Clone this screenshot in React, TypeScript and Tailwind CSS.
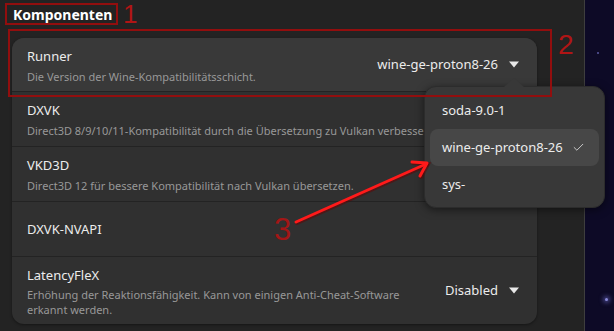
import { Check } from 'lucide-react'

const ROWS = [
  { title: 'DXVK', sub: 'Direct3D 8/9/10/11-Kompatibilität durch die Übersetzung zu Vulkan verbessern.' },
  { title: 'VKD3D', sub: 'Direct3D 12 für bessere Kompatibilität nach Vulkan übersetzen.' },
]

function Caret() {
  return (
    <svg width="12" height="7" viewBox="0 0 12 7" className="shrink-0">
      <path d="M1 0.5 L11 0.5 L6 6.5 Z" fill="#e8e8e8" />
    </svg>
  )
}

function Row({ title, sub }: { title: string; sub?: string }) {
  return (
    <div className="h-[55px] flex flex-col justify-center gap-[3px] px-[15px] border-b border-[#232323]">
      <p className="text-[13px] leading-[20px] text-[#ececec]">{title}</p>
      {sub && <p className="text-[11px] leading-[15px] text-[#989898] whitespace-nowrap overflow-hidden">{sub}</p>}
    </div>
  )
}

export default function App() {
  return (
    <div className="relative w-[614px] h-[331px] flex overflow-hidden font-['Noto_Sans',sans-serif]">
      <div className="w-[585px] h-full bg-[#232323] border-r border-[#3e3e3e] pt-[5px] pl-[12px]">
        <h2 className="pl-[1px] text-[14px] leading-[19px] font-bold text-white">Komponenten</h2>
        <div className="mt-[14px] w-[525px] rounded-[12px] bg-[#303030] overflow-hidden shadow-[0_1px_3px_rgba(0,0,0,0.4)]">
          <div className="h-[54px] flex items-center justify-between pl-[15px] pr-[17px] bg-[#393939] border-b border-[#232323]">
            <div className="flex flex-col gap-[3px]">
              <p className="text-[13px] leading-[20px] text-[#ececec]">Runner</p>
              <p className="text-[11px] leading-[15px] text-[#989898]">Die Version der Wine-Kompatibilitätsschicht.</p>
            </div>
            <div className="flex items-center gap-[10px]">
              <span className="text-[13px] text-[#ececec]">wine-ge-proton8-26</span>
              <Caret />
            </div>
          </div>
          {ROWS.map(r => (
            <Row key={r.title} title={r.title} sub={r.sub} />
          ))}
          <Row title="DXVK-NVAPI" />
          <div className="h-[67px] flex items-center justify-between pl-[15px] pr-[17px]">
            <div className="flex flex-col gap-[2px] w-[400px]">
              <p className="text-[13px] leading-[20px] text-[#ececec]">LatencyFleX</p>
              <p className="text-[11px] leading-[15px] text-[#989898]">
                Erhöhung der Reaktionsfähigkeit. Kann von einigen Anti-Cheat-Software erkannt werden.
              </p>
            </div>
            <div className="flex items-center gap-[10px]">
              <span className="text-[13px] text-[#ececec]">Disabled</span>
              <Caret />
            </div>
          </div>
        </div>
      </div>
      <div className="relative flex-1 h-full bg-[#0d0a26]">
        <span className="absolute left-[12px] top-[52px] w-[2px] h-[2px] rounded-full bg-[#5a5aa0]" />
        <span className="absolute left-[20px] top-[298px] w-[3px] h-[3px] rounded-full bg-[#8a8ad8] shadow-[0_0_4px_2px_rgba(120,120,220,0.5)]" />
        <span className="absolute left-[10px] top-[182px] w-[1px] h-[1px] bg-[#5050a0]" />
      </div>

      {/* dropdown popover */}
      <div className="absolute left-[424px] top-[86px] w-[181px] h-[122px] rounded-[12px] bg-[#383838] border border-[#2c2c2c] shadow-[0_2px_8px_rgba(0,0,0,0.5)] p-[5px] text-[13px] text-[#ececec]">
        <div className="absolute -top-[9px] left-[79px] w-0 h-0 border-l-[10px] border-r-[10px] border-b-[9px] border-l-transparent border-r-transparent border-b-[#383838]" />
        <div className="h-[37px] flex items-center pl-[12px]">soda-9.0-1</div>
        <div className="h-[37px] flex items-center justify-between pl-[12px] pr-[14px] rounded-[8px] bg-[#474747]">
          <span>wine-ge-proton8-26</span>
          <Check size={13} strokeWidth={1.6} color="#dcdcdc" />
        </div>
        <div className="h-[37px] flex items-center pl-[12px]">sys-</div>
      </div>

      {/* annotations */}
      <div className="absolute left-[5px] top-[3px] w-[113px] h-[22px] border-2 border-[#920e0e]" />
      <span className="absolute left-[123px] top-0 text-[26px] leading-[29px] text-[#b01515] font-['Liberation_Sans',sans-serif]">1</span>
      <div className="absolute left-[8px] top-[29px] w-[544px] h-[68px] border-2 border-[#920e0e]" />
      <span className="absolute left-[558px] top-[31px] text-[28px] leading-[28px] text-[#b01515] font-['Liberation_Sans',sans-serif]">2</span>
      <span className="absolute left-[274px] top-[214px] text-[31px] leading-[31px] text-[#a31616] font-['Liberation_Sans',sans-serif]">3</span>
      <svg className="absolute left-0 top-0" width="614" height="331">
        <g stroke="#6a0000" strokeOpacity="0.5" strokeWidth="4" strokeLinecap="round" fill="none" transform="translate(1 1)">
          <path d="M296 222 L426 164" />
          <path d="M412 162 L427 163 L420 176" />
        </g>
        <g stroke="#ff1a1a" strokeWidth="3" strokeLinecap="round" strokeLinejoin="round" fill="none">
          <path d="M296 222 L426 164" />
          <path d="M412 162 L427 163 L420 176" />
        </g>
      </svg>
    </div>
  )
}
